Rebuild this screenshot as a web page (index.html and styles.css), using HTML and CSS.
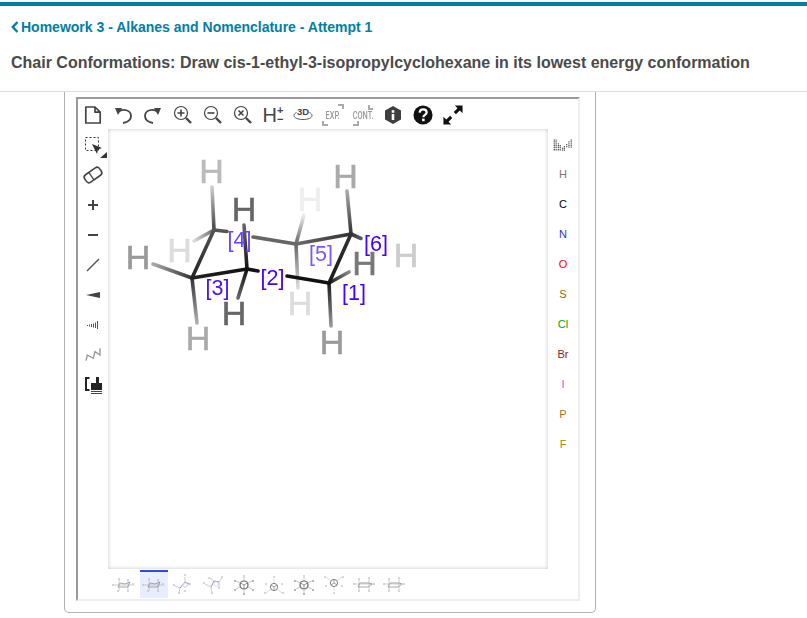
FILE: index.html
```html
<!DOCTYPE html>
<html lang="en">
<head>
  <meta charset="UTF-8" />
  <title>Homework 3 - Alkanes and Nomenclature</title>
  <link rel="stylesheet" href="styles.css">
</head>
<body>
  <div class="top-bar"></div>
  <div class="header">
    <a class="back-link" href="#">
      <svg class="back-arrow" viewBox="0 0 8 12"><path d="M6.5 1 L1.8 6 L6.5 11" /></svg>
      Homework 3 - Alkanes and Nomenclature - Attempt 1
    </a>
    <h1 class="title">Chair Conformations: Draw cis-1-ethyl-3-isopropylcyclohexane in its lowest energy conformation</h1>
  </div>

  <svg class="sprites">
    <symbol id="thumb-chair" viewBox="0 0 28 26">
      <g fill="none" stroke-width=".8">
        <path d="M4 13 H24 M9 7 V19 M18 8 V19" stroke="#aaa" />
        <path d="M8 15 L10 11 L15 12 L20 10 L18 15 L12 15 Z" stroke="#666" />
        <path class="tips" d="M9 7 h0 M18 8 h0 M3 13 h0 M23 12 h0 M8 19 h0 M18 19 h0" />
      </g>
    </symbol>
    <symbol id="thumb-chair-tint" viewBox="0 0 28 26">
      <g fill="none" stroke-width=".8">
        <path d="M4 12 H24 M9 7 V19 M19 7 V19" stroke="#aaa" />
        <path d="M8 15 L10 11 L19 11 L22 12 L18 15 L10 15 Z" stroke="#666" />
        <path d="M11 11 H18" stroke="#e09aa0" />
        <path class="tips" d="M9 7 h0 M19 6 h0 M4 12 h0 M24 12 h0 M9 19 h0 M19 19 h0" />
      </g>
    </symbol>
    <symbol id="thumb-sawhorse" viewBox="0 0 28 26">
      <g fill="none" stroke-width=".9">
        <path d="M10 16 L15 10 L19 12" stroke="#555" />
        <path d="M10 16 L5 14 M10 16 L9 21 M15 10 V5 M15 16 L19 12" stroke="#aaa" />
        <circle cx="15" cy="13" r="2.2" stroke="#c5c5ee" />
        <path class="tips" d="M15 3 h0 M4 13 h0 M20 12 h0 M9 21 h0 M15 19 h0" />
      </g>
    </symbol>
    <symbol id="thumb-sawhorse-up" viewBox="0 0 28 26">
      <g fill="none" stroke-width=".9">
        <path d="M11 15 L14 9 L19 10" stroke="#555" />
        <path d="M11 15 L5 12 M11 15 L12 21 M14 9 L10 6 M19 10 L22 6 M19 10 V15" stroke="#aaa" />
        <circle cx="16" cy="12" r="2.2" stroke="#c5c5ee" />
        <path class="tips" d="M9 6 h0 M22 5 h0 M4 11 h0 M12 21 h0 M19 16 h0" />
      </g>
    </symbol>
    <symbol id="thumb-newman" viewBox="0 0 28 26">
      <g fill="none">
        <circle cx="14" cy="15" r="3.6" stroke="#444" stroke-width="1" />
        <path d="M14 15 V18.5 M14 15 L11 13 M14 15 L17 13" stroke="#555" stroke-width=".8" />
        <path d="M14 11 V7 M11 17 L6 21 M17 17 L22 21" stroke="#bbb" stroke-width=".8" />
        <path class="tips" d="M14 5 h0 M5 21 h0 M23 21 h0 M6 12 h0 M22 12 h0" />
      </g>
    </symbol>
    <symbol id="thumb-newman-dark" viewBox="0 0 28 26">
      <g fill="none">
        <circle cx="14" cy="13" r="4" stroke="#222" stroke-width="1.2" />
        <path d="M14 13 V17 M14 13 L10.5 11 M14 13 L17.5 11" stroke="#444" stroke-width=".8" />
        <path d="M14 9 V5 M14 17 V21 M10 15 L6 17 M18 15 L22 17 M10 11 L6 9 M18 11 L22 9" stroke="#999" stroke-width=".8" />
        <path class="tips-dark" d="M14 22 h0 M5 18 h0 M23 18 h0 M5 9 h0 M23 9 h0" />
        <path class="tips" d="M14 4 h0" />
      </g>
    </symbol>
  </svg>

  <div class="content">
    <div class="panel">
      <div class="editor">
        <div class="toolbar">
          <button class="tool"><svg viewBox="0 0 20 20"><path class="ic" d="M2.8 2 H12 L17.2 7.2 V18 H2.8 Z M12 2 V7.2 H17.2" stroke-width="1.7" stroke-linejoin="round" /></svg></button>
          <button class="tool"><svg viewBox="0 0 20 20"><path class="ic" d="M5 7 C10 3 18 5 18 11 C18 14 15.5 17 10 18" stroke-width="1.8" /><path class="fill" d="M2 3 L9 3 L5 10 Z" /></svg></button>
          <button class="tool"><svg viewBox="0 0 20 20"><path class="ic" d="M15 7 C10 3 2 5 2 11 C2 14 4.5 17 10 18" stroke-width="1.8" /><path class="fill" d="M18 3 L11 3 L15 10 Z" /></svg></button>
          <button class="tool"><svg viewBox="0 0 20 20"><circle class="ic" cx="8" cy="8" r="6.5" stroke-width="1.2" /><path class="ic" d="M8 4.5 V11.5 M4.5 8 H11.5" stroke-width="1.6" /><path class="ic" d="M13 13 L18 18" stroke-width="2.4" /></svg></button>
          <button class="tool"><svg viewBox="0 0 20 20"><circle class="ic" cx="8" cy="8" r="6.5" stroke-width="1.2" /><path class="ic" d="M4.5 8 H11.5" stroke-width="1.6" /><path class="ic" d="M13 13 L18 18" stroke-width="2.4" /></svg></button>
          <button class="tool"><svg viewBox="0 0 20 20"><circle class="ic" cx="8" cy="8" r="6.5" stroke-width="1.2" /><path class="ic" d="M5.5 5.5 L10.5 10.5 M10.5 5.5 L5.5 10.5" stroke-width="1.6" /><path class="ic" d="M13 13 L18 18" stroke-width="2.4" /></svg></button>
          <button class="tool tool-h">H<span class="pm"><span>+</span><span>−</span></span></button>
          <button class="tool"><svg viewBox="0 0 20 20"><path class="ic" d="M3.5 7.5 C1.8 8.3 1 9.4 1 10.5 C1 13 5 14.5 10 14.5 C15 14.5 19 13 19 10.5 C19 9.4 18.2 8.3 16.5 7.5" stroke-width=".9" /><text class="txt-3d" x="10" y="10">3D</text></svg></button>
          <button class="tool tool-exp"><svg viewBox="0 0 22 22"><path class="corner" d="M16 1 H21 V5 M1 17 V21 H6" /></svg><span>EXP.</span></button>
          <button class="tool tool-exp"><svg viewBox="0 0 22 22"><path class="corner" d="M17 1 V5 H21 M1 21 H6 V17" /></svg><span>CONT.</span></button>
          <button class="tool"><svg viewBox="0 0 20 20"><path d="M10 1 L18 5.5 V14.5 L10 19 L2 14.5 V5.5 Z" fill="#3e3e3e" /><rect x="8.7" y="9" width="2.6" height="6" fill="#fff" /><rect x="8.7" y="5.2" width="2.6" height="2.6" fill="#fff" /></svg></button>
          <button class="tool"><svg viewBox="0 0 22 22"><circle cx="11" cy="11" r="10.5" fill="#111" /><path d="M7.3 8.4 C7.5 5.8 9.2 4.8 11.2 4.8 C13.4 4.8 15 6.2 15 8.2 C15 10.9 11.4 10.9 11.4 13.4" fill="none" stroke="#fff" stroke-width="2.5" /><rect x="10" y="15" width="2.8" height="2.8" fill="#fff" /></svg></button>
          <button class="tool"><svg viewBox="0 0 22 22"><path d="M3.5 18.5 L9 13 M13 9 L18.5 3.5" fill="none" stroke="#111" stroke-width="3.4" /><path d="M13 0.5 H21.5 V9 Z M0.5 13 V21.5 H9 Z" fill="#111" /></svg></button>
        </div>

        <div class="main">
          <div class="tools-left">
            <button class="tool"><svg viewBox="0 0 24 24"><rect x="4.5" y="4.5" width="13" height="13" fill="none" stroke="#333" stroke-dasharray="2 2" /><path d="M11 11 L21 15 L17 16.5 L16 21 Z" fill="#333" /><path d="M26 19 V25 H19 Z" fill="#333" /></svg></button>
            <button class="tool"><svg viewBox="0 0 24 24"><g transform="rotate(-35 12 12)"><rect x="3" y="7.5" width="18" height="9" rx="3" fill="none" stroke="#444" stroke-width="1.6" /><path d="M10 7.5 V16.5" stroke="#444" stroke-width="1.3" /></g></svg></button>
            <button class="tool"><svg viewBox="0 0 24 24"><path d="M7 12 H17 M12 7 V17" stroke="#444" stroke-width="2" /></svg></button>
            <button class="tool"><svg viewBox="0 0 24 24"><path d="M7 12 H17" stroke="#444" stroke-width="2" /></svg></button>
            <button class="tool"><svg viewBox="0 0 24 24"><path d="M6 18 L18 6" stroke="#555" stroke-width="1.5" /></svg></button>
            <button class="tool"><svg viewBox="0 0 24 24"><path d="M5 12 L19 9 V15 Z" fill="#444" /></svg></button>
            <button class="tool"><svg viewBox="0 0 24 24"><path d="M6.5 12 V13 M8.5 11.5 V13.5 M10.5 11 V14 M12.5 10.5 V14.5 M14.5 9.5 V15 M16.5 8 V16" stroke="#555" stroke-width="1" /></svg></button>
            <button class="tool"><svg viewBox="0 0 24 24"><path d="M5 17.7 L6.3 12 L12.3 15.3 L14 8.7 L19 12 L19 5.3" fill="none" stroke="#999" stroke-width="1.4" /></svg></button>
            <button class="tool"><svg viewBox="0 0 24 24"><path d="M8.5 5 H5 V17 H8.5" fill="none" stroke="#222" stroke-width="2" /><rect x="10" y="10" width="11" height="7" fill="#222" /><rect x="15" y="4" width="3" height="6" fill="#222" /><path d="M10 18.5 H21 M10 20.5 H21" stroke="#444" stroke-width="1" /></svg></button>
          </div>

          <div class="canvas">
            <svg class="molecule" viewBox="108 129 440 440">
              <defs>
                <linearGradient id="g1" gradientUnits="userSpaceOnUse" x1="214" y1="230" x2="192" y2="278"><stop offset="0" stop-color="#555" /><stop offset="1" stop-color="#222" /></linearGradient>
                <linearGradient id="g2" gradientUnits="userSpaceOnUse" x1="192" y1="278" x2="247" y2="269"><stop offset="0" stop-color="#222" /><stop offset="1" stop-color="#111" /></linearGradient>
                <linearGradient id="g3" gradientUnits="userSpaceOnUse" x1="296" y1="244" x2="351" y2="234"><stop offset="0" stop-color="#6a6a6a" /><stop offset="1" stop-color="#333" /></linearGradient>
                <linearGradient id="g4" gradientUnits="userSpaceOnUse" x1="351" y1="234" x2="329" y2="283"><stop offset="0" stop-color="#333" /><stop offset="1" stop-color="#1a1a1a" /></linearGradient>
                <linearGradient id="h1" gradientUnits="userSpaceOnUse" x1="214" y1="230" x2="212" y2="187"><stop offset="0" stop-color="#444" /><stop offset="1" stop-color="#ccc" /></linearGradient>
                <linearGradient id="h2" gradientUnits="userSpaceOnUse" x1="214" y1="230" x2="194" y2="241"><stop offset="0" stop-color="#666" /><stop offset="1" stop-color="#ddd" /></linearGradient>
                <linearGradient id="h3" gradientUnits="userSpaceOnUse" x1="192" y1="278" x2="153" y2="264"><stop offset="0" stop-color="#333" /><stop offset="1" stop-color="#aaa" /></linearGradient>
                <linearGradient id="h4" gradientUnits="userSpaceOnUse" x1="192" y1="278" x2="197" y2="323"><stop offset="0" stop-color="#333" /><stop offset="1" stop-color="#b0b0b0" /></linearGradient>
                <linearGradient id="h5" gradientUnits="userSpaceOnUse" x1="247" y1="269" x2="244" y2="225"><stop offset="0" stop-color="#111" /><stop offset="1" stop-color="#666" /></linearGradient>
                <linearGradient id="h6" gradientUnits="userSpaceOnUse" x1="247" y1="269" x2="238" y2="298"><stop offset="0" stop-color="#111" /><stop offset="1" stop-color="#666" /></linearGradient>
                <linearGradient id="h7" gradientUnits="userSpaceOnUse" x1="296" y1="244" x2="304" y2="215"><stop offset="0" stop-color="#666" /><stop offset="1" stop-color="#eee" /></linearGradient>
                <linearGradient id="h8" gradientUnits="userSpaceOnUse" x1="296" y1="244" x2="298" y2="288"><stop offset="0" stop-color="#666" /><stop offset="1" stop-color="#ddd" /></linearGradient>
                <linearGradient id="h9" gradientUnits="userSpaceOnUse" x1="351" y1="234" x2="347" y2="191"><stop offset="0" stop-color="#333" /><stop offset="1" stop-color="#aaa" /></linearGradient>
                <linearGradient id="h10" gradientUnits="userSpaceOnUse" x1="351" y1="234" x2="390" y2="249"><stop offset="0" stop-color="#333" /><stop offset="1" stop-color="#ccc" /></linearGradient>
                <linearGradient id="h11" gradientUnits="userSpaceOnUse" x1="329" y1="283" x2="349" y2="272"><stop offset="0" stop-color="#1a1a1a" /><stop offset="1" stop-color="#888" /></linearGradient>
                <linearGradient id="h12" gradientUnits="userSpaceOnUse" x1="329" y1="283" x2="331" y2="326"><stop offset="0" stop-color="#1a1a1a" /><stop offset="1" stop-color="#999" /></linearGradient>
              </defs>

              <g class="h-atoms">
                <text x="310" y="211" color="#eee">H</text>
                <text x="300" y="315" color="#ddd">H</text>
                <text x="179.5" y="261.5" color="#ddd">H</text>
              </g>

              <g class="bonds">
                <line x1="304" y1="215" x2="296" y2="244" stroke="url(#h7)" />
                <line x1="298" y1="288" x2="296" y2="244" stroke="url(#h8)" />
                <line x1="194" y1="241" x2="214" y2="230" stroke="url(#h2)" />
                <line x1="212" y1="187" x2="214" y2="230" stroke="url(#h1)" />
                <line x1="153" y1="264" x2="192" y2="278" stroke="url(#h3)" />
                <line x1="197" y1="323" x2="192" y2="278" stroke="url(#h4)" />
                <line x1="347" y1="191" x2="351" y2="234" stroke="url(#h9)" />
                <line x1="361" y1="238.5" x2="351" y2="234" stroke="url(#h10)" />
                <line x1="349" y1="272" x2="329" y2="283" stroke="url(#h11)" />
                <line x1="331" y1="326" x2="329" y2="283" stroke="url(#h12)" />
                <line x1="214" y1="230" x2="227" y2="231.5" stroke="#555" />
                <line x1="253" y1="237" x2="296" y2="244" stroke="#666" />
                <line x1="296" y1="244" x2="351" y2="234" stroke="url(#g3)" />
                <line x1="214" y1="230" x2="192" y2="278" stroke="url(#g1)" />
                <line x1="351" y1="234" x2="329" y2="283" stroke="url(#g4)" />
                <line x1="192" y1="278" x2="247" y2="269" stroke="url(#g2)" />
                <line x1="244" y1="225" x2="247" y2="269" stroke="url(#h5)" />
                <line x1="238" y1="298" x2="247" y2="269" stroke="url(#h6)" />
                <line x1="247" y1="269" x2="258" y2="271" stroke="#111" />
                <line x1="287" y1="276" x2="329" y2="283" stroke="#111" />
              </g>

              <g class="h-atoms">
                <text x="211.5" y="183" color="#bbb">H</text>
                <text x="138" y="269" color="#999">H</text>
                <text x="198" y="350" color="#aaa">H</text>
                <text x="244" y="221" color="#666">H</text>
                <text x="234" y="325" color="#666">H</text>
                <text x="345.5" y="187.5" color="#aaa">H</text>
                <text x="406" y="267" color="#ccc">H</text>
                <text x="364.5" y="275" color="#777">H</text>
                <text x="332" y="353.5" color="#999">H</text>
              </g>

              <g class="atom-nums">
                <text x="239.5" y="246.5" fill="#6a3cff">[4]</text>
                <text x="217.5" y="295" fill="#4a10f0">[3]</text>
                <text x="272.5" y="285" fill="#4400ff">[2]</text>
                <text x="321" y="260.5" fill="#7a55ff">[5]</text>
                <text x="376" y="250.5" fill="#4400ff">[6]</text>
                <text x="354" y="299.5" fill="#4400ff">[1]</text>
              </g>
            </svg>
          </div>

          <div class="tools-right">
            <button class="tool"><svg viewBox="0 0 24 24"><path d="M2.5 6 V18.5 M4.5 6 V18.5 M7 10 V18.5 M9 12 V18.5 M11.5 15 V18.5 M13.5 13 V18.5 M16 11 V15 M18.5 8 V15 M21 6 V15" stroke="#555" stroke-width="1.3" stroke-dasharray="1.4 .6" /></svg></button>
            <button class="tool el el-h">H</button>
            <button class="tool el el-c">C</button>
            <button class="tool el el-n">N</button>
            <button class="tool el el-o">O</button>
            <button class="tool el el-s">S</button>
            <button class="tool el el-cl">Cl</button>
            <button class="tool el el-br">Br</button>
            <button class="tool el el-i">I</button>
            <button class="tool el el-p">P</button>
            <button class="tool el el-f">F</button>
          </div>
        </div>

        <div class="templates">
          <button class="thumb"><svg><use href="#thumb-chair" /></svg></button>
          <button class="thumb selected"><svg><use href="#thumb-chair" /></svg></button>
          <button class="thumb"><svg><use href="#thumb-sawhorse" /></svg></button>
          <button class="thumb"><svg><use href="#thumb-sawhorse-up" /></svg></button>
          <button class="thumb"><svg><use href="#thumb-newman-dark" /></svg></button>
          <button class="thumb"><svg><use href="#thumb-newman" /></svg></button>
          <button class="thumb"><svg><use href="#thumb-newman-dark" /></svg></button>
          <button class="thumb flip"><svg><use href="#thumb-newman" /></svg></button>
          <button class="thumb"><svg><use href="#thumb-chair-tint" /></svg></button>
          <button class="thumb"><svg><use href="#thumb-chair-tint" /></svg></button>
        </div>
      </div>
    </div>
  </div>
</body>
</html>
```

FILE: styles.css
```css
* { box-sizing:border-box; }
body { margin:0; font-family:'Liberation Sans', Arial, sans-serif; background:#fff; color:#4a4a4a; overflow:hidden; }
button { font-family:inherit; background:none; border:none; padding:0; margin:0; }

.top-bar { height:4px; margin-top:2px; background:#007fa3; }

.header { height:85px; padding:13px 11px 0; }
.back-link { display:flex; align-items:center; gap:2px; height:16px; font-size:14px; font-weight:bold; color:#007fa3; text-decoration:none; }
.back-arrow { width:8px; height:12px; fill:none; stroke:#007fa3; stroke-width:2.4; }
.title { margin:18px 0 0; font-size:16px; line-height:20px; font-weight:bold; color:#4a4a4a; white-space:nowrap; }

.sprites { display:none; }

.content { border-top:1px solid #ddd; }
.panel { width:532px; height:521px; margin-left:64px; padding:5px 0 0 11px; border:1px solid #b0b0b0; border-top:none; border-radius:0 0 5px 5px; }

.editor { width:504px; height:504px; border-top:2px solid #999; border-left:2px solid #999; border-right:2px solid #eee; border-bottom:2px solid #eee; }

.toolbar { display:flex; height:30px; }
.tool { display:flex; align-items:center; justify-content:center; width:30px; height:30px; flex:none; }
.toolbar .tool { padding-top:2px; }
.toolbar .tool svg { width:20px; height:20px; }
.ic { fill:none; stroke:#444; }
.fill { fill:#444; }
.txt-3d { font-size:9.5px; font-weight:bold; fill:#444; text-anchor:middle; }

.tool-h { font-size:20px; color:#444; }
.pm { display:flex; flex-direction:column; align-items:center; font-size:11px; line-height:9px; font-weight:bold; }

.tool-exp { position:relative; font-family:'Roboto', 'Liberation Sans', sans-serif; font-size:10px; font-weight:500; color:#999; }
.tool-exp span { transform:scaleX(.74); }
.toolbar .tool-exp svg { position:absolute; left:4px; top:5px; width:22px; height:22px; }
.corner { fill:none; stroke:#aaa; stroke-width:2; }

.main { display:flex; height:440px; }
.tools-left, .tools-right { width:30px; padding-top:1px; display:flex; flex-direction:column; }
.tools-left svg { width:24px; height:24px; overflow:visible; }
.tools-right svg { width:22px; height:22px; }

.canvas { width:440px; height:440px; box-shadow:inset 0 0 4px rgba(0,0,0,.22); }
.molecule { display:block; width:440px; height:440px; }

.bonds line { stroke-width:3.6; stroke-linecap:round; }
.h-atoms { opacity:.99; }
.h-atoms text { font-size:34px; text-anchor:middle; fill:currentColor; stroke:currentColor; stroke-width:.6; }
.atom-nums { opacity:.99; }
.atom-nums text { font-size:21.5px; text-anchor:middle; }

.el { font-size:11px; padding-bottom:2px; }
.el-h { color:#777; }
.el-c { color:#000; }
.el-n { color:#3333cc; }
.el-o { color:#f00; }
.el-s { color:#777700; }
.el-cl { color:#00aa00; }
.el-br { color:#7a2a2a; }
.el-i { color:#b05fd0; }
.el-p { color:#b07010; }
.el-f { color:#b08020; }

.templates { display:flex; gap:2px; height:30px; padding:1px 0 0 32px; }
.thumb { width:28px; height:28px; flex:none; border-top:2px solid transparent; }
.thumb svg { display:block; width:28px; height:26px; filter:blur(.5px); opacity:.7; }
.thumb.selected { background:#e8eeff; border-top-color:#3347e8; }
.thumb.flip svg { transform:scaleY(-1); }
.tips { stroke:#bbb; stroke-width:2.2; stroke-linecap:round; }
.tips-dark { stroke:#888; stroke-width:2.2; stroke-linecap:round; }
```
